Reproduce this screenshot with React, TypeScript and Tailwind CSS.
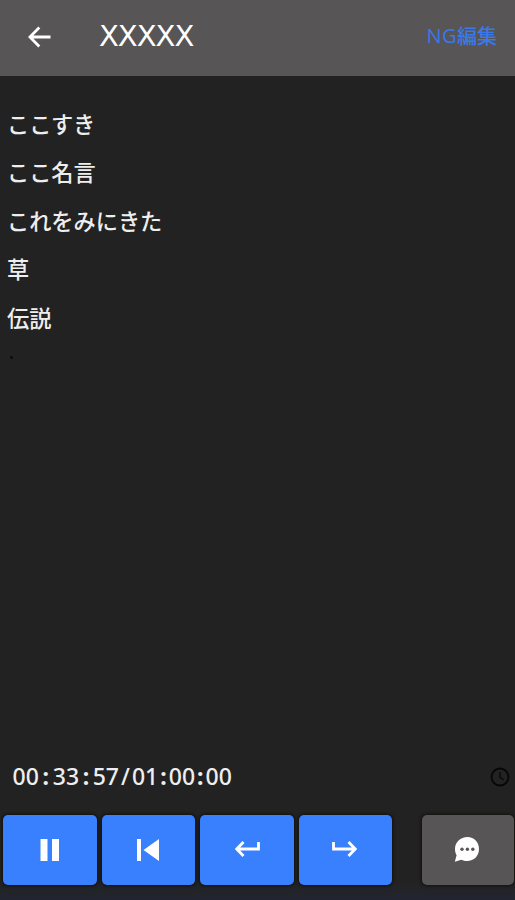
import type { ReactNode } from "react";

const comments = ["ここすき", "ここ名言", "これをみにきた", "草", "伝説"];

function ControlButton({ label, className, children }: { label: string; className: string; children: ReactNode }) {
  return (
    <button
      aria-label={label}
      className={`flex h-[70px] shrink-0 items-center justify-center rounded-[5px] shadow-[0_0_3px_1px_#12100c] ${className}`}
    >
      {children}
    </button>
  );
}

function Header() {
  return (
    <header className="flex h-[76px] items-center bg-[#575556] pr-[18px] pb-[3px] pl-7">
      <svg className="mt-px h-[22px] w-6 shrink-0" viewBox="0 0 24 22" fill="none" stroke="#fff" strokeWidth="2.8">
        <path d="M11.3 1.5 1.9 11l9.4 9.5M1.9 11H22.5" />
      </svg>
      <h1 className="ml-[47px] font-['DejaVu_Sans',sans-serif] text-[29px] leading-none tracking-[-1px] text-white">
        XXXXX
      </h1>
      <button className="ml-auto flex items-center pb-px text-[20px] leading-none font-medium whitespace-nowrap text-[#3b78e8]">
        <span className="font-['Open_Sans',sans-serif] text-[20px] tracking-[0.5px]">NG</span>
        <span className="font-['Noto_Sans_CJK_JP',sans-serif]">編集</span>
      </button>
    </header>
  );
}

export default function App() {
  return (
    <div className="flex h-[900px] w-[515px] flex-col overflow-hidden bg-[#222] font-['Noto_Sans','Noto_Sans_CJK_JP',sans-serif]">
      <Header />
      <main className="flex-1 pt-[22.5px] pl-[7px]">
        <ul className="font-['Noto_Sans_CJK_JP',sans-serif] text-[22.2px] leading-[48.6px] font-medium text-[#eee]">
          {comments.map((comment) => (
            <li key={comment}>{comment}</li>
          ))}
        </ul>
        <div className="mt-[15px] ml-[3px] size-[3px] rounded-full bg-[#0c0c0c]" />
      </main>
      <div className="flex h-[74px] shrink-0 items-center justify-between pr-[5px] pl-[12.5px]">
        <div className="flex pb-px text-[23px] leading-none font-medium text-[#eee]">
          <span>00</span>
          <span className="w-[14px] text-center font-bold">:</span>
          <span>33</span>
          <span className="w-[13.5px] text-center font-bold">:</span>
          <span>57</span>
          <span className="w-[13px] text-center">/</span>
          <span>01</span>
          <span className="w-[10.5px] text-center font-bold">:</span>
          <span>00</span>
          <span className="w-[10.5px] text-center font-bold">:</span>
          <span>00</span>
        </div>
        <svg className="size-5" viewBox="0 0 20 20" fill="none" stroke="#070707">
          <circle cx="10" cy="10" r="8.5" strokeWidth="1.8" />
          <path d="M10 5v5.4l3.7 2.3" strokeWidth="1.3" />
        </svg>
      </div>
      <footer className="flex h-[86px] shrink-0 bg-linear-to-b from-[#222] from-75% to-[#22252f] pt-px pl-[3px]">
        <ControlButton label="一時停止" className="w-[94px] bg-[#3980ff]">
          <svg className="mr-px mb-px h-[22px] w-[19px]" viewBox="0 0 19 22" fill="#fff">
            <path d="M.5 0h7v22h-7zM12 0h7v22h-7z" />
          </svg>
        </ControlButton>
        <ControlButton label="最初に戻る" className="ml-[5px] w-[93px] bg-[#3980ff]">
          <svg className="mr-[2px] mb-px h-[22px] w-[22px]" viewBox="0 0 22 22" fill="#fff">
            <path d="M0 0h4v22H0zM22 0v22L6.5 11z" />
          </svg>
        </ControlButton>
        <ControlButton label="巻き戻し" className="ml-[5px] w-[94px] bg-[#3980ff]">
          <svg className="mb-[2px] h-4 w-[25px]" viewBox="0 0 25 16" fill="none" stroke="#fff" strokeWidth="2.8">
            <path d="M8.5 1.1 1.8 8l6.7 6.9M1.8 8h21.7V1" />
          </svg>
        </ControlButton>
        <ControlButton label="早送り" className="ml-[5px] w-[93px] bg-[#3980ff]">
          <svg className="mr-[3px] mb-[2px] h-4 w-[25px]" viewBox="0 0 25 16" fill="none" stroke="#fff" strokeWidth="2.8">
            <path d="M16.5 1.1 23.2 8l-6.7 6.9M23.2 8H1.5V1" />
          </svg>
        </ControlButton>
        <ControlButton label="コメント" className="ml-[30px] w-[92px] bg-[#575556]">
          <svg className="mr-[2px] mb-px h-[25px] w-[26px]" viewBox="0 0 26 25">
            <path
              d="M13.5 0C20.2 0 25 5 25 12s-5 12-11.8 12c-2.1 0-4.1-.5-5.9-1.3L.8 24.7l1.8-6.4C1.5 16.4 1 14.4 1 12 1 5 6.4 0 13.5 0Z"
              fill="#fff"
            />
            <g fill="#575556">
              <circle cx="8" cy="12.3" r="1.7" />
              <circle cx="13.4" cy="12.3" r="1.7" />
              <circle cx="18.8" cy="12.3" r="1.7" />
            </g>
          </svg>
        </ControlButton>
      </footer>
    </div>
  );
}
